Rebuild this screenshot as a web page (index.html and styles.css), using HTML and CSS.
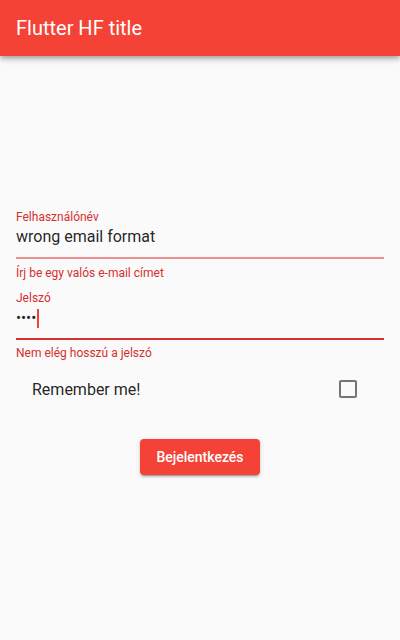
FILE: index.html
```html
<!DOCTYPE html>
<html lang="hu">
<head>
<meta charset="utf-8">
<title>Flutter HF title</title>
<link rel="stylesheet" href="styles.css">
</head>
<body>
<header class="appbar">
  <h1 class="appbar-title">Flutter HF title</h1>
</header>
<main class="form">
  <div class="field">
    <div class="field-label">Felhasználónév</div>
    <div class="field-input">wrong email format</div>
    <div class="underline underline-error"></div>
  </div>
  <div class="field-error">Írj be egy valós e-mail címet</div>

  <div class="field">
    <div class="field-label">Jelszó</div>
    <div class="field-input"><span class="dots">••••</span><span class="cursor"></span></div>
    <div class="underline underline-focused"></div>
  </div>
  <div class="field-error field-error-focused">Nem elég hosszú a jelszó</div>

  <div class="remember">
    <span class="remember-text">Remember me!</span>
    <span class="checkbox"></span>
  </div>

  <div class="actions">
    <button class="btn" type="button">Bejelentkezés</button>
  </div>
</main>
</body>
</html>
```
FILE: styles.css
```css
html, body {
  margin: 0;
  padding: 0;
}
body {
  background: #fafafa;
  font-family: Roboto, "Noto Sans", sans-serif;
  width: 400px;
  height: 640px;
  overflow: hidden;
}
.appbar {
  height: 56px;
  background: #f44336;
  display: flex;
  align-items: center;
  padding: 0 16px;
  box-shadow: 0 2px 4px -1px rgba(0,0,0,0.2), 0 4px 5px 0 rgba(0,0,0,0.14), 0 1px 10px 0 rgba(0,0,0,0.12);
  position: relative;
  z-index: 1;
}
.appbar-title {
  margin: 0;
  color: #fff;
  font-size: 20px;
  font-weight: 400;
  line-height: 24px;
}
.form {
  padding: 153px 16px 0;
}
.field-label {
  font-size: 12px;
  line-height: 16px;
  color: #d32f2f;
}
.field-input {
  font-size: 16px;
  line-height: 24px;
  color: rgba(0,0,0,0.87);
  display: flex;
  align-items: center;
  height: 24px;
  margin-bottom: 8px;
}
.underline {
  height: 2px;
}
.underline-error {
  background: #ea9090;
}
.underline-focused {
  background: #d32f2f;
}
.dots {
  font-size: 15px;
  color: #222;
}
.cursor {
  display: inline-block;
  width: 2px;
  height: 19px;
  background: #f44336;
  margin-left: 1px;
}
.field-error {
  margin-top: 6px;
  margin-bottom: 9px;
  font-size: 12px;
  line-height: 16px;
  color: #d32f2f;
}
.field-error-focused {
  margin-top: 5px;
  margin-bottom: 4px;
}
.remember {
  height: 48px;
  display: flex;
  align-items: center;
  justify-content: space-between;
  padding: 0 27px 0 16px;
}
.remember-text {
  font-size: 16px;
  color: rgba(0,0,0,0.87);
}
.checkbox {
  box-sizing: border-box;
  width: 18px;
  height: 18px;
  border: 2px solid #757575;
  border-radius: 2px;
}
.actions {
  display: flex;
  justify-content: center;
  margin-top: 26px;
}
.btn {
  height: 36px;
  padding: 0 16px;
  border: none;
  border-radius: 4px;
  background: #f44336;
  color: #fff;
  font-family: Roboto, sans-serif;
  font-size: 14px;
  font-weight: 500;
  box-shadow: 0 3px 1px -2px rgba(0,0,0,0.2), 0 2px 2px 0 rgba(0,0,0,0.14), 0 1px 5px 0 rgba(0,0,0,0.12);
}
```
